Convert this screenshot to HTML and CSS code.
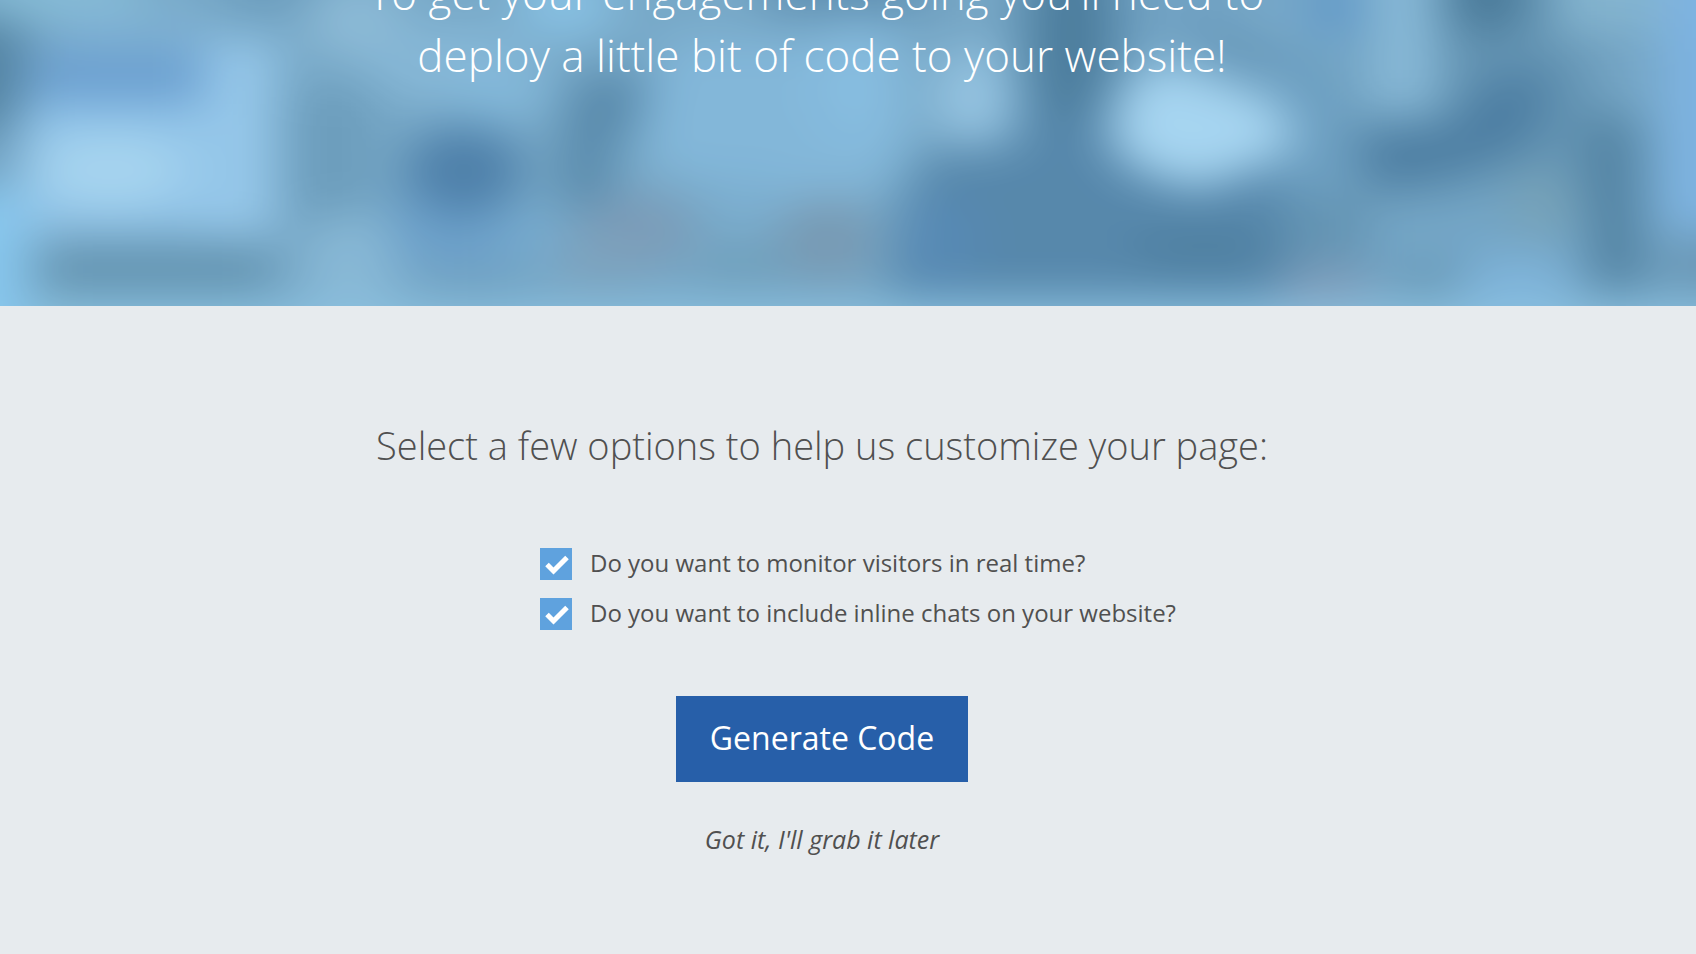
FILE: index.html
```html
<!DOCTYPE html>
<html lang="en">
<head>
  <meta charset="UTF-8">
  <meta name="viewport" content="width=device-width, initial-scale=1.0">
  <title>Generate Code</title>
  <link rel="stylesheet" href="styles.css">
</head>
<body>
  <header class="hero">
    <!-- Soft office backdrop -->
    <svg class="hero-bg" viewBox="0 0 1696 306" preserveAspectRatio="xMidYMax slice" aria-hidden="true">
      <defs>
        <filter id="soft" filterUnits="userSpaceOnUse" x="-100" y="-100" width="1896" height="506" color-interpolation-filters="sRGB">
          <feGaussianBlur stdDeviation="25 22"/>
        </filter>
      </defs>
      <rect width="1696" height="306" fill="#78a9c8"/>
      <g filter="url(#soft)" opacity="0.8">
        <rect x="-100" y="-100" width="1896" height="506" fill="#78a9c8"/>
        <!-- left desk and screen -->
        <ellipse cx="60" cy="-5" rx="90" ry="25" fill="#8cc3dc"/>
        <rect x="60" y="10" width="150" height="50" fill="#81b3d5"/>
        <rect x="225" y="-60" width="95" height="75" fill="#6a9bbb"/>
        <rect x="-60" y="20" width="82" height="110" fill="#4a7a99"/>
        <rect x="-40" y="125" width="50" height="45" fill="#6c9cbd"/>
        <rect x="20" y="100" width="255" height="132" fill="#9acdf2"/>
        <rect x="200" y="40" width="76" height="195" fill="#9dcff2"/>
        <rect x="30" y="50" width="175" height="54" fill="#6a9fd3"/>
        <ellipse cx="110" cy="170" rx="75" ry="36" fill="#b2dff9"/>
        <rect x="288" y="90" width="85" height="130" fill="#6a9bba"/>
        <rect x="-80" y="190" width="106" height="180" fill="#8ccff8"/>
        <rect x="45" y="246" width="225" height="45" fill="#5f8fab"/>
        <ellipse cx="350" cy="270" rx="46" ry="60" fill="#8cbcd9"/>
        <ellipse cx="355" cy="20" rx="50" ry="38" fill="#92bfda"/>
        <ellipse cx="450" cy="65" rx="85" ry="40" fill="#8abbda"/>
        <ellipse cx="500" cy="90" rx="55" ry="30" fill="#86bcde"/>
        <ellipse cx="565" cy="5" rx="50" ry="35" fill="#8cc7ea"/>
        <rect x="395" y="190" width="110" height="75" fill="#6a9fcb"/>
        <ellipse cx="464" cy="170" rx="60" ry="44" fill="#4577a3"/>
        <ellipse cx="530" cy="238" rx="28" ry="35" fill="#76abd0"/>
        <rect x="430" y="268" width="100" height="30" fill="#70a0bf"/>
        <!-- middle figure -->
        <path d="M670 40 H900 L910 150 L870 200 H770 L650 170 L640 100 Z" fill="#86bbde"/>
        <path d="M568 90 Q600 60 650 80 L638 120 L612 150 L610 205 L556 205 Z" fill="#5182a4"/>
        <ellipse cx="860" cy="85" rx="45" ry="60" fill="#8bc2e6"/>
        <rect x="765" y="-60" width="170" height="74" fill="#5c8cae"/>
        <ellipse cx="635" cy="232" rx="58" ry="38" fill="#7d99b4"/>
        <ellipse cx="600" cy="265" rx="50" ry="25" fill="#7ea2bc"/>
        <ellipse cx="748" cy="205" rx="36" ry="28" fill="#7db0d2"/>
        <rect x="700" y="244" width="85" height="40" fill="#6f9eb9"/>
        <ellipse cx="828" cy="240" rx="48" ry="44" fill="#7897af"/>
        <!-- dark figure on the right -->
        <path d="M1025 -60 H1120 V150 H1250 L1320 200 V296 H888 L898 210 L930 150 L1020 145 Z" fill="#4f80a5"/>
        <ellipse cx="940" cy="240" rx="35" ry="45" fill="#5083b2"/>
        <ellipse cx="1070" cy="35" rx="44" ry="85" fill="#437494"/>
        <ellipse cx="974" cy="98" rx="38" ry="50" fill="#9dcbe8"/>
        <rect x="925" y="-30" width="80" height="75" fill="#76a6c5"/>
        <rect x="1130" y="-40" width="180" height="110" fill="#70a1c2"/>
        <ellipse cx="1235" cy="58" rx="50" ry="25" fill="#6394b6"/>
        <ellipse cx="1275" cy="10" rx="28" ry="35" fill="#7aabcb"/>
        <rect x="1275" y="65" width="70" height="130" fill="#6a9dc0"/>
        <path d="M1110 120 Q1120 68 1175 64 Q1215 72 1265 100 Q1315 130 1275 160 L1200 190 L1140 172 Q1105 150 1110 120 Z" fill="#b2e0fb"/>
        <ellipse cx="1205" cy="250" rx="75" ry="26" fill="#467799"/>
        <rect x="1285" y="195" width="85" height="70" fill="#6090af"/>
        <!-- right side of the room -->
        <rect x="1360" y="-40" width="240" height="240" fill="#6090af"/>
        <ellipse cx="1335" cy="5" rx="28" ry="35" fill="#5f98cb"/>
        <rect x="1368" y="-60" width="70" height="174" fill="#8cbddb"/>
        <ellipse cx="1485" cy="-8" rx="42" ry="42" fill="#3f6f8e"/>
        <path d="M1350 136 L1450 126 L1485 83 Q1530 58 1552 85 L1530 142 L1460 170 L1370 188 Z" fill="#427399"/>
        <rect x="1555" y="-60" width="120" height="98" fill="#87b7d1"/>
        <rect x="1590" y="30" width="55" height="65" fill="#74a4c4"/>
        <path d="M1375 215 L1570 165 V285 H1375 Z" fill="#73a5c6"/>
        <ellipse cx="1540" cy="205" rx="30" ry="35" fill="#78a1b3"/>
        <ellipse cx="1515" cy="290" rx="60" ry="36" fill="#81b7df"/>
        <ellipse cx="1430" cy="280" rx="36" ry="14" fill="#6292ae"/>
        <ellipse cx="1325" cy="290" rx="50" ry="26" fill="#829bb8"/>
        <path d="M1592 110 L1638 120 L1645 290 H1592 L1586 200 Z" fill="#487898"/>
        <rect x="1662" y="-60" width="120" height="290" fill="#7fb6e8"/>
        <rect x="1665" y="240" width="100" height="50" fill="#6592b1"/>
        <!-- lighter bottom edge -->
        <rect x="250" y="304" width="1500" height="80" fill="#90c7e6"/>
        <rect x="30" y="304" width="220" height="80" fill="#90c9e6"/>
      </g>
    </svg>
    <h1 class="hero-title">To get your engagements going you'll need to&nbsp;<br>deploy a little bit of code to your website!</h1>
  </header>

  <main class="setup">
    <h2 class="setup-title">Select a few options to help us customize your page:</h2>

    <form class="setup-form">
      <div class="options">
        <div class="option">
          <input type="checkbox" id="monitorVisitors" checked>
          <label for="monitorVisitors">Do you want to monitor visitors in real time?</label>
        </div>
        <div class="option">
          <input type="checkbox" id="inlineChats" checked>
          <label for="inlineChats">Do you want to include inline chats on your website?</label>
        </div>
      </div>

      <button type="button" class="generate">Generate Code</button>
      <a href="#" class="later">Got it, I'll grab it later</a>
    </form>
  </main>
</body>
</html>
```
FILE: styles.css
```css
* {
  box-sizing: border-box;
}

body {
  margin: 0;
  background-color: #e7ebee;
  color: #505050;
  font-family: "Open Sans", sans-serif;
  text-align: center;
}

.hero {
  position: relative;
  overflow: hidden;
  padding: 0 52px 220px 0;
}

.hero-bg {
  position: absolute;
  top: 0;
  left: 0;
  width: 100%;
  height: 100%;
}

.hero-title {
  position: relative;
  margin: -38px 0 0;
  color: #fff;
  font-size: 44px;
  font-weight: 300;
  line-height: 62px;
}

.setup {
  padding: 112px 52px 96px 0;
}

.setup-title {
  margin: 0 0 74px;
  font-size: 38px;
  font-weight: 300;
  line-height: 54px;
}

.setup-form {
  display: flex;
  flex-direction: column;
  align-items: center;
}

.options {
  display: flex;
  flex-direction: column;
  gap: 16px;
  width: 564px;
  margin-bottom: 66px;
  text-align: left;
}

.option {
  display: flex;
  align-items: center;
  gap: 18px;
  font-size: 24px;
  line-height: 34px;
  white-space: nowrap;
}

.option input {
  appearance: none;
  flex: none;
  width: 32px;
  height: 32px;
  margin: 2px 0 0;
  background-color: #5fa2de;
  cursor: pointer;
}

.option input:checked {
  background-image: url("data:image/svg+xml,%3Csvg xmlns='http://www.w3.org/2000/svg' viewBox='0 0 32 32'%3E%3Cpath d='M7 16.5 L13.5 23 L27 9.5' fill='none' stroke='%23fff' stroke-width='5'/%3E%3C/svg%3E");
}

.generate {
  padding: 20px 34px 22px;
  background-color: #275fa9;
  color: #fff;
  border: none;
  font-family: inherit;
  font-size: 32px;
  line-height: 44px;
  cursor: pointer;
}

.generate:hover {
  background-color: #1f5090;
}

.later {
  margin-top: 40px;
  color: #505050;
  font-size: 25px;
  font-style: italic;
  line-height: 34px;
  text-decoration: none;
}
```
